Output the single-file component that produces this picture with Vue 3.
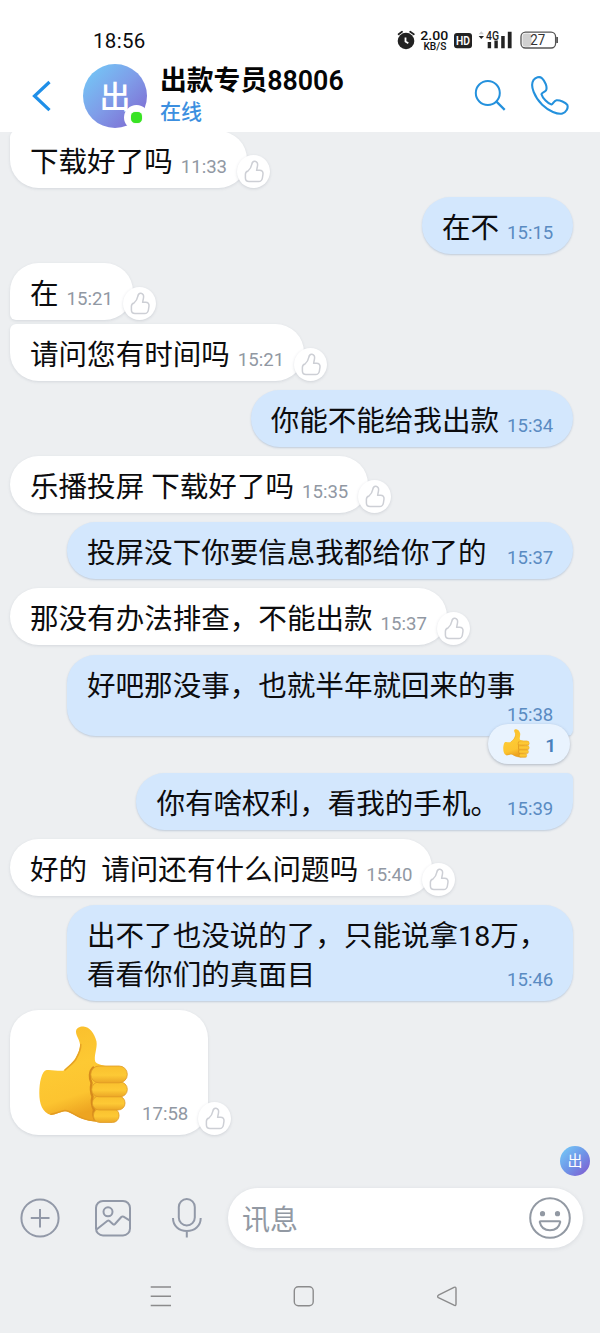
<script setup>
const messages = [
  { lines: ['下载好了吗'], time: '11:33', react: true, gap: -1, cls: 'tail-top' },
  { lines: ['在不'], time: '15:15', mine: true, gap: 9 },
  { lines: ['在'], time: '15:21', react: true, gap: 9, cls: 'tail-bottom' },
  { lines: ['请问您有时间吗'], time: '15:21', react: true, gap: 4, cls: 'tail-top' },
  { lines: ['你能不能给我出款'], time: '15:34', mine: true, gap: 9 },
  { lines: ['乐播投屏 下载好了吗'], time: '15:35', react: true, gap: 9 },
  { lines: ['投屏没下你要信息我都给你了的'], time: '15:37', mine: true, gap: 9, cls: 'wide' },
  { lines: ['那没有办法排查，不能出款'], time: '15:37', react: true, gap: 9 },
  { lines: ['好吧那没事，也就半年就回来的事'], time: '15:38', mine: true, gap: 10, cls: 'wide stacked tail-bottom', count: 1 },
  { lines: ['你有啥权利，看我的手机。'], time: '15:39', mine: true, gap: 37, cls: 'tail-top' },
  { lines: ['好的  请问还有什么问题吗'], time: '15:40', react: true, gap: 9 },
  { lines: ['出不了也没说的了，只能说拿18万，', '看看你们的真面目'], time: '15:46', mine: true, gap: 9, cls: 'wide overlay' },
  { sticker: true, lines: [], time: '17:58', react: true, gap: 9, cls: 'sticker' },
]
</script>

<template>
  <div class="phone">
    <svg width="0" height="0" class="defs">
      <defs>
        <linearGradient id="skin" x1="0" y1="0" x2="0.25" y2="1">
          <stop offset="0" stop-color="#f9bd2c" />
          <stop offset="0.5" stop-color="#fdc933" />
          <stop offset="0.8" stop-color="#fcc430" />
          <stop offset="1" stop-color="#eda421" />
        </linearGradient>
        <linearGradient id="finger" x1="0" y1="0" x2="0" y2="1">
          <stop offset="0" stop-color="#f9c02e" />
          <stop offset="0.55" stop-color="#fdc935" />
          <stop offset="1" stop-color="#eba626" />
        </linearGradient>
        <symbol id="thumb" viewBox="0 0 90 98">
          <path d="M7.7 44 C13 43.5 19 45.3 24.3 44.7 C29 40 33.5 37.5 36 33 C38.5 28.5 41.3 23.5 41 18.5 C40.6 13.5 37 9.5 37 5.7 C37 2 41 0.4 44.5 0.6 C50.5 1 55.5 7.5 57.5 15.5 C58.6 22 54.5 30 56.3 35.7 C58.5 38.5 63 39 67 40 L72 60 L68 94 C60 96.5 51 95.5 44 93 C37 90.8 31.5 85.5 26 85 C21 86.2 16.5 88.8 11.7 89 C3.5 86.5 0.3 78 0.3 67 C0.3 57 2.5 45 7.7 44 Z" fill="url(#skin)" />
          <path d="M26 44 C30 40 34.5 37.2 37 33 C39.5 28.5 42 23.5 41.8 18.5" fill="none" stroke="#e6a325" stroke-width="1.5" stroke-linecap="round" />
          <path d="M12 88.2 C17 87.8 21.5 85.2 26 84.5 C31.5 85 37 90 44 92.3 C48 94 53 94.8 57 95" fill="none" stroke="#e39b22" stroke-width="1.4" stroke-linecap="round" />
          <path d="M55 41 C49.5 45 50.5 53 52.5 57 C51.5 62 52 67 53.5 70.5 C52.3 75 53 80 55 84 C54 87 54.5 91 56 94" fill="none" stroke="#d68a1c" stroke-width="2.4" />
          <rect x="54.5" y="82.5" width="25.5" height="14" rx="6.5" fill="url(#finger)" stroke="#e09a24" stroke-width="0.8" />
          <rect x="53.4" y="70" width="32.6" height="14" rx="6.8" fill="url(#finger)" stroke="#e09a24" stroke-width="0.8" />
          <rect x="52.7" y="56" width="35.6" height="14.8" rx="7.2" fill="url(#finger)" stroke="#e09a24" stroke-width="0.8" />
          <rect x="51.8" y="40" width="36.5" height="16.8" rx="8.2" fill="url(#finger)" stroke="#e09a24" stroke-width="0.8" />
        </symbol>
      </defs>
    </svg>

    <header class="top">
      <div class="status">
        <span class="clock">18:56</span>
        <svg class="status-icons" width="170" height="30" viewBox="395 25 170 30">
          <g stroke="#222" stroke-width="1.8" stroke-linecap="round" fill="none">
            <path d="M398.6 34.2 L402 31.8 M410.2 31.8 L413.8 34.2" />
          </g>
          <circle cx="406" cy="41" r="8.3" fill="#222" />
          <path d="M405.5 37.5 V41.5 L408.3 43.2" fill="none" stroke="#fff" stroke-width="1.8" />
          <text x="420.3" y="40" font-size="13" font-weight="500" textLength="28" lengthAdjust="spacingAndGlyphs" fill="#111">2.00</text>
          <text x="423.4" y="50.3" font-size="10.2" font-weight="500" textLength="23" lengthAdjust="spacingAndGlyphs" fill="#111">KB/S</text>
          <rect x="454" y="33" width="18" height="15.3" rx="3" fill="#222" />
          <text x="456" y="45.3" font-size="12.5" font-weight="600" textLength="14" lengthAdjust="spacingAndGlyphs" fill="#fff">HD</text>
          <path d="M478.6 34.3 L481.3 31.2 L484 34.3 Z" fill="#ccc" />
          <path d="M478.6 36 L481.3 39 L484 36 Z" fill="#222" />
          <text x="486" y="39.5" font-size="12" font-weight="500" textLength="13" lengthAdjust="spacingAndGlyphs" fill="#222">4G</text>
          <path d="M487.7 42h3.4v6.3h-3.4zM494.4 40.5h3.4v7.8h-3.4zM501.2 36h3.5v12.3h-3.5zM507.8 31.7h3.8v16.6h-3.8z" fill="#222" />
          <rect x="522.5" y="33.5" width="9" height="13.3" rx="3" fill="#d0d0d0" />
          <rect x="521" y="32.2" width="34.6" height="15.8" rx="4.5" fill="none" stroke="#555" stroke-width="1.3" />
          <path d="M556.3 37h1.6v6h-1.6z" fill="#444" />
          <text x="530.3" y="45.2" font-size="14" textLength="15" lengthAdjust="spacingAndGlyphs" fill="#333">27</text>
        </svg>
      </div>
      <div class="bar">
        <svg class="back" width="20" height="34" viewBox="0 0 20 34">
          <path d="M17.5 3 L2.5 17 L17.5 31.2" fill="none" stroke="#1f8fe8" stroke-width="3.2" />
        </svg>
        <div class="avatar">
          <span>出</span>
          <i class="presence"></i>
        </div>
        <div class="who">
          <div class="name">出款专员88006</div>
          <div class="online">在线</div>
        </div>
        <svg class="search" width="34" height="34" viewBox="0 0 34 34">
          <circle cx="14.8" cy="15" r="12" fill="none" stroke="#2491dd" stroke-width="2" />
          <path d="M23.2 23.4 L31.7 31.9" stroke="#2491dd" stroke-width="2.2" />
        </svg>
        <svg class="call" width="40" height="40" viewBox="0 0 40 40">
          <path d="M3.4 5.2 C5.5 2.3 9.5 1.1 12 3.2 C15 6 17.7 12.3 16 15.4 C14.7 17.2 12.2 17.4 11.5 19.2 C12.5 23.2 18 28.8 21.4 29.5 C23 29.2 23.7 25.9 26.5 25.3 C29.8 24.9 35.5 27.2 37.3 29.8 C38.6 33.2 36 37.5 32.4 38.5 C27.8 39.7 18.5 36 12.2 29.8 C4.8 22.5 -0.3 11 3.4 5.2 Z" fill="none" stroke="#2491dd" stroke-width="2.1" stroke-linejoin="round" />
        </svg>
      </div>
    </header>

    <main class="chat">
      <div
        v-for="(m, i) in messages"
        :key="i"
        class="row"
        :class="{ mine: m.mine }"
        :style="{ marginTop: m.gap + 'px' }"
      >
        <div class="bubble" :class="m.cls">
          <svg v-if="m.sticker" class="big" width="90" height="98"><use href="#thumb" /></svg>
          <div v-else class="text">
            <div v-for="l in m.lines" :key="l">{{ l }}</div>
          </div>
          <span class="time">{{ m.time }}</span>
          <span v-if="m.react" class="like">
            <svg width="33" height="33" viewBox="0 0 33 33">
              <path d="M14.8 9.3 C15.2 6.8 16.5 6 18 6.2 C20.3 6.6 20.9 8.6 20.5 10.8 L19.6 15.3 H22.6 C25 15.4 26.2 16.8 26 19 L25.4 23 C25 25.4 23.8 26.5 21.6 26.5 H12 C9.6 26.5 8.4 25.3 8.4 23 V19.3 C8.4 17.3 9.4 16.5 11 16 C12.8 14.4 14.3 11.8 14.8 9.3 Z" fill="none" stroke="#cdcfd5" stroke-width="1.5" stroke-linejoin="round" />
            </svg>
          </span>
          <span v-if="m.count" class="tally">
            <svg width="27" height="29"><use href="#thumb" /></svg>
            <b>{{ m.count }}</b>
          </span>
        </div>
      </div>
      <div class="seen"><span>出</span></div>
    </main>

    <footer class="composer">
      <svg class="plus" width="40" height="40" viewBox="0 0 40 40" fill="none" stroke="#9299a8" stroke-width="2">
        <circle cx="20" cy="20" r="18.6" />
        <path d="M20 11 V29.5 M10.8 20 H29.5" />
      </svg>
      <svg class="photo" width="38" height="38" viewBox="0 0 38 38" fill="none" stroke="#9299a8" stroke-width="2">
        <rect x="2" y="2" width="34" height="34.4" rx="7" />
        <circle cx="14" cy="12.8" r="4.5" />
        <path d="M2.5 30.5 L13.5 21.8 Q14.5 21.2 15.5 22 L19 25.3 Q20 26 21 25 L27.3 18 Q28.3 17 29.5 17.7 L35.5 21.3" />
      </svg>
      <svg class="mic" width="32" height="42" viewBox="0 0 32 42" fill="none" stroke="#9299a8" stroke-width="2">
        <rect x="7.8" y="2" width="16" height="26.5" rx="8" />
        <path d="M2 21 C2 29 8 34 15.8 34 C23.6 34 29.7 29 29.7 21 M15.8 34 V40.5" />
      </svg>
      <div class="field">
        <span>讯息</span>
        <svg width="42" height="42" viewBox="0 0 42 42" fill="none" stroke="#9299a3" stroke-width="2">
          <circle cx="21" cy="21" r="19.8" />
          <circle cx="13.5" cy="16.7" r="2.6" fill="#9299a3" stroke="none" />
          <circle cx="28.5" cy="16.7" r="2.6" fill="#9299a3" stroke="none" />
          <path d="M11.6 24.2 H30.4 Q31.4 24.2 31.2 25.2 C30 30.5 26 33.3 21 33.3 C16 33.3 12 30.5 10.8 25.2 Q10.6 24.2 11.6 24.2 Z" />
        </svg>
      </div>
    </footer>

    <nav class="keys">
      <svg width="22" height="24" viewBox="0 0 22 24" fill="none" stroke="#8b8b8c" stroke-width="1.5">
        <path d="M.7 3 H21 M.7 12.2 H21 M.7 21.4 H21" />
      </svg>
      <svg width="22" height="24" viewBox="0 0 22 24" fill="none" stroke="#8b8b8c" stroke-width="1.4">
        <rect x="1.3" y="2.8" width="18.9" height="19" rx="4" />
      </svg>
      <svg width="22" height="24" viewBox="0 0 22 24" fill="none" stroke="#8b8b8c" stroke-width="1.4" stroke-linejoin="round">
        <path d="M18 3.4 Q20 2.5 20 4.6 V20 Q20 22 18 21.2 L2.4 13.6 Q.9 12.4 2.4 11.2 Z" />
      </svg>
    </nav>
  </div>
</template>

<style>
html,
body {
  margin: 0;
  background: #edeff1;
}
</style>

<style scoped>
.phone {
  width: 600px;
  height: 1333px;
  overflow: hidden;
  display: flex;
  flex-direction: column;
  background: #edeff1;
  font-family: Roboto, 'Noto Sans CJK SC', sans-serif;
  color: #0c0c0e;
}
.defs {
  position: absolute;
}
.top {
  height: 132px;
  flex: none;
  background: #fff;
}
.status {
  height: 60px;
  display: flex;
  justify-content: space-between;
  padding: 0 35px 0 93px;
}
.clock {
  font-size: 20.5px;
  font-weight: 450;
  line-height: 24px;
  margin-top: 29px;
  letter-spacing: 0.3px;
}
.status-icons {
  margin-top: 25px;
}
.bar {
  display: flex;
  height: 72px;
  padding-left: 32px;
}
.back {
  margin-top: 18.5px;
  flex: none;
}
.avatar {
  position: relative;
  width: 64px;
  height: 64px;
  margin: 3.5px 0 0 31px;
  flex: none;
  border-radius: 50%;
  background: linear-gradient(135deg, #74c6f6 8%, #7f9ce8 50%, #7e6bd2 92%);
  color: #fff;
  font-size: 31px;
  font-weight: 500;
  line-height: 67px;
  text-align: center;
}
.presence {
  position: absolute;
  left: 41px;
  top: 41.5px;
  width: 11px;
  height: 11px;
  border: 7.5px solid #fff;
  border-radius: 50%;
  background: #fff;
}
.presence::before {
  content: '';
  display: block;
  width: 11px;
  height: 11px;
  border-radius: 4.5px;
  background: #38e323;
  box-shadow: 0 0 1px #7cf06c;
}
.who {
  margin-left: 13px;
  width: 220px;
}
.name {
  font-size: 26.8px;
  font-weight: 600;
  line-height: 34px;
  margin-top: 4px;
  white-space: nowrap;
  color: #050505;
}
.online {
  font-size: 21px;
  font-weight: 500;
  line-height: 29px;
  color: #3c8fe0;
}
.search {
  margin: 18px 0 0 93px;
  flex: none;
}
.call {
  margin: 14.5px 0 0 23px;
  flex: none;
}
.chat {
  position: relative;
  height: 1056px;
  flex: none;
  overflow: hidden;
  padding: 0 27px 0 10px;
  box-sizing: border-box;
  display: flow-root;
}
.row {
  display: flex;
}
.row.mine {
  justify-content: flex-end;
}
.bubble {
  position: relative;
  box-sizing: border-box;
  min-height: 57px;
  padding: 12px 20px 6px;
  border-radius: 28.5px;
  background: #fff;
  display: flex;
  align-items: flex-end;
  justify-content: space-between;
  box-shadow: 0 1px 3px rgba(90, 100, 120, 0.16);
}
.mine .bubble {
  background: #d3e7fd;
  box-shadow: 0 1px 2px rgba(60, 100, 150, 0.25);
}
.text {
  font-size: 28.55px;
  line-height: 39px;
  white-space: pre;
}
.time {
  font-size: 18.6px;
  line-height: 22px;
  width: 46px;
  margin: 0 0 4px 8px;
  color: #9198a3;
  white-space: nowrap;
}
.mine .time {
  color: #5a8bc2;
}
.wide {
  width: 506px;
}
.stacked {
  flex-direction: column;
  align-items: flex-start;
  height: 81px;
}
.stacked .text {
  height: 37px;
}
.stacked .time {
  align-self: flex-end;
}
.overlay {
  display: grid;
  grid-template-columns: minmax(0, 1fr);
  justify-content: stretch;
}
.overlay > * {
  grid-area: 1 / 1;
}
.overlay .time {
  align-self: end;
  justify-self: end;
}
.row:not(.mine) .tail-top {
  border-top-left-radius: 6px;
}
.row:not(.mine) .tail-bottom {
  border-bottom-left-radius: 6px;
}
.mine .tail-top {
  border-top-right-radius: 6px;
}
.mine .tail-bottom {
  border-bottom-right-radius: 6px;
}
.sticker {
  width: 198px;
  height: 125px;
}
.big {
  align-self: flex-start;
  margin: 4px 0 0 9px;
  flex: none;
}
.like {
  position: absolute;
  right: -23px;
  bottom: 0;
  width: 33px;
  height: 33px;
  border-radius: 50%;
  background: #fff;
  box-shadow: 0 1px 3px rgba(90, 100, 120, 0.2);
}
.like svg,
.big {
  display: block;
}
.tally {
  position: absolute;
  right: 3px;
  bottom: -28px;
  width: 82px;
  height: 40px;
  box-sizing: border-box;
  padding: 0 14px 1px 15px;
  border-radius: 20px;
  background: #e9f3fe;
  box-shadow: 0 1px 3px rgba(60, 80, 110, 0.35);
  display: flex;
  align-items: center;
  justify-content: space-between;
}
.tally b {
  font-size: 19px;
  font-weight: 600;
  color: #4a80bb;
  margin-top: 3px;
}
.seen {
  width: 30px;
  height: 30px;
  border-radius: 50%;
  margin: 11px -17px 0 auto;
  background: linear-gradient(135deg, #74c6f6 8%, #6f96e8 50%, #7e5fd2 92%);
  color: #fff;
  font-size: 15px;
  line-height: 31px;
  text-align: center;
}
.composer {
  height: 60px;
  flex: none;
  display: flex;
  align-items: center;
  padding: 0 17px 0 20px;
}
.composer > svg {
  flex: none;
}
.photo {
  margin-left: 34px;
}
.mic {
  margin-left: 39px;
}
.field {
  flex: 1;
  margin-left: 25px;
  height: 60px;
  box-sizing: border-box;
  padding: 0 12px 0 14px;
  border-radius: 30px;
  background: #fff;
  box-shadow: 0 1px 4px rgba(90, 100, 120, 0.14);
  display: flex;
  align-items: center;
  justify-content: space-between;
  font-size: 28px;
  color: #9299a3;
}
.keys {
  display: flex;
  justify-content: space-between;
  padding: 36px 142px 0 150px;
}
</style>
